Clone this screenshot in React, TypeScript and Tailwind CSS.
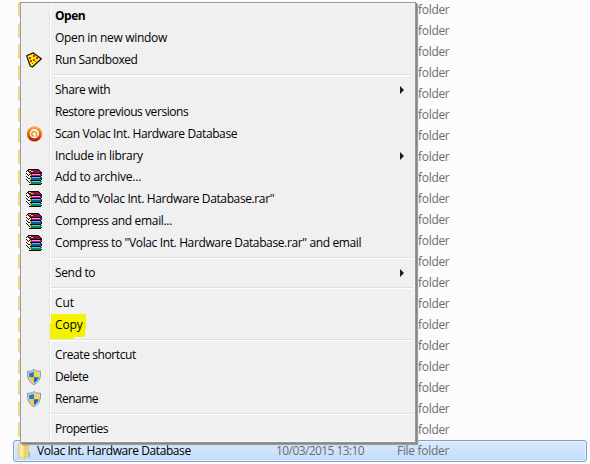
import React from "react";

function Pizza() {
  return (
    <svg width="16" height="16" viewBox="0 0 16 16">
      <path d="M7.200 .9 15.400 6.800 6.400 15 4.200 14 .7 3.800Z" fill="#fff200" stroke="#111" strokeWidth="1.2" strokeLinejoin="round" />
      <path shapeRendering="crispEdges" d="M7 3h2v2H7zM10 5h2v2h-2zM3 5h2v2H3zM7 7h2v2H7zM4 8h2v2H4zM9 9h1v1H9zM6 11h1v1H6z" fill="#f01c1c" />
    </svg>
  );
}

function Avast() {
  return (
    <svg width="16" height="16" viewBox="0 0 16 16">
      <defs>
        <linearGradient id="av" x1="0" y1="0" x2="0" y2="1">
          <stop offset="0" stopColor="#f7b34a" />
          <stop offset=".5" stopColor="#e86c10" />
          <stop offset="1" stopColor="#a01804" />
        </linearGradient>
      </defs>
      <circle cx="8.400" cy="7.800" r="7.6" fill="url(#av)" />
      <circle cx="8.400" cy="7.7" r="4.600" fill="#fff6e6" />
      <path d="M7.800 10.200A2.300 2.300 0 1 1 10.400 7.700V11" fill="none" stroke="#f08a1c" strokeWidth="1.4" />
    </svg>
  );
}

const bookColours: Record<string, string> = {
  k: "#0d0810",
  m: "#8a1248",
  M: "#b3186c",
  P: "#f29ccf",
  y: "#e2cf2e",
  w: "#f6f6f6",
  b: "#0b58ac",
  c: "#62b6f5",
  g: "#058a58",
  G: "#52dca2",
};

const bookPixels = [
  "..kkkkkkkkkkk...",
  ".kmyymmmmmmmmk..",
  "kwkmmyymmmmmmmk.",
  "wwwkmmmmmmmmmmmk",
  "kwwwkkkkkkkkkkkk",
  "wkwkyMPPPPPPPPMM",
  "wwkwyMMMMMMMMMMk",
  "kwwwkkkkkkkkkkk.",
  "wkwwybccccccccbb",
  "wwkkybbbbbbbbbbk",
  "kwwwybbbbbbbbbbk",
  "wkwwkkkkkkkkkkk.",
  "wwkwygGGGGGGGGgg",
  ".wwkygggggggggg.",
  "..wwyggggggggggk",
  "...kkkkkkkkkkkk.",
];

function Books() {
  return (
    <svg width="16" height="16" viewBox="0 0 16 16" shapeRendering="crispEdges">
      {bookPixels.flatMap((row, y) =>
        [...row].map((c, x) => (c === "." ? null : <rect key={`${x}-${y}`} x={x} y={y} width="1" height="1" fill={bookColours[c]} />))
      )}
    </svg>
  );
}

function Shield() {
  return (
    <svg width="16" height="16" viewBox="0 0 16 16">
      <path d="M8 .5C6.5 2 4 2.4 1.6 2.3 1 8.500 2.800 13 8 15.600 13.200 13 15 8.500 14.400 2.300 12 2.400 9.500 2 8 .5Z" fill="#d6dade" stroke="#858c92" />
      <path d="M7.900 2.500C6.500 3.500 5 3.900 3.100 3.900 2.900 5.500 3 7 3.300 8.200H7.900Z" fill="#207ad4" />
      <path d="M8 2.500C9.500 3.500 11 3.900 12.900 3.900 13.100 5.500 13 7 12.700 8.200H8Z" fill="#ffd72e" />
      <path d="M3.300 8.200C4 10.700 5.500 12.700 8 13.900V8.200Z" fill="#fbc81c" />
      <path d="M12.700 8.200C12 10.700 10.500 12.700 8 13.900V8.200Z" fill="#1768c2" />
    </svg>
  );
}

function Folder() {
  return (
    <svg width="14" height="16" viewBox="0 0 14 16" className="shrink-0">
      <defs>
        <linearGradient id="fo" x1="0" y1="0" x2="1" y2="0">
          <stop offset="0" stopColor="#ecd67a" />
          <stop offset=".45" stopColor="#fbeeaa" />
          <stop offset="1" stopColor="#e2c65b" />
        </linearGradient>
      </defs>
      <path d="M5 1h5l1 2v11l-5 1Z" fill="#d8b84a" />
      <path d="M10 9h2v5h-2z" fill="#75b9e3" />
      <path d="M.3 1H4l1 1 3 .5v13L.3 14Z" fill="url(#fo)" stroke="#dfc76c" strokeWidth=".6" />
      <path d="M8 3.500 10.500 2v12L8 15.400Z" fill="#f0d674" />
    </svg>
  );
}

type Entry = { label: string; icon?: () => React.JSX.Element; arrow?: boolean; bold?: boolean; mark?: boolean; short?: boolean; tracking: string };

const groups: Entry[][] = [
  [
    { label: "Open", bold: true, tracking: "tracking-[-0.5px]" },
    { label: "Open in new window", tracking: "tracking-[-0.31px]" },
    { label: "Run Sandboxed", icon: Pizza, tracking: "tracking-[-0.43px]" },
  ],
  [
    { label: "Share with", arrow: true, tracking: "tracking-[-0.4px]" },
    { label: "Restore previous versions", tracking: "tracking-[-0.44px]" },
    { label: "Scan Volac Int. Hardware Database", icon: Avast, tracking: "tracking-[-0.39px]" },
    { label: "Include in library", arrow: true, short: true, tracking: "tracking-[-0.32px]" },
    { label: "Add to archive...", icon: Books, tracking: "tracking-[-0.22px]" },
    { label: 'Add to "Volac Int. Hardware Database.rar"', icon: Books, tracking: "tracking-[-0.38px]" },
    { label: "Compress and email...", icon: Books, tracking: "tracking-[-0.33px]" },
    { label: 'Compress to "Volac Int. Hardware Database.rar" and email', icon: Books, tracking: "tracking-[-0.37px]" },
  ],
  [{ label: "Send to", arrow: true, tracking: "tracking-[-0.35px]" }],
  [
    { label: "Cut", tracking: "tracking-[-0.1px]" },
    { label: "Copy", mark: true, tracking: "tracking-[-0.1px]" },
  ],
  [
    { label: "Create shortcut", tracking: "tracking-[-0.4px]" },
    { label: "Delete", icon: Shield, tracking: "tracking-[-0.5px]" },
    { label: "Rename", icon: Shield, tracking: "tracking-[-0.5px]" },
  ],
  [{ label: "Properties", tracking: "tracking-[-0.52px]" }],
];

function Item({ label, icon: Icon, arrow, bold, mark, short, tracking }: Entry) {
  return (
    <div className={`relative flex items-center ${short ? "h-[21px]" : "h-[22px]"}`}>
      <div className="ml-[3px] h-4 w-[29px] shrink-0">{Icon && <Icon />}</div>
      {mark && (
        <svg className="absolute left-[27px] top-0" width="36" height="25" viewBox="0 0 36 25">
          <path d="M1 0H36V16H35V22H34V23H24V25H0V9H1Z" fill="#f3f300" />
        </svg>
      )}
      <span className={`relative whitespace-nowrap ${bold ? "font-bold" : ""} ${tracking}`}>{label}</span>
      {arrow && (
        <svg className="ml-auto mr-[9px]" width="4" height="8" viewBox="0 0 4 8">
          <path d="M0 0 4 4 0 8Z" fill="#1b1b1b" />
        </svg>
      )}
    </div>
  );
}

export default function App() {
  return (
    <div className="relative h-[464px] w-[590px] overflow-hidden bg-[#fcfcfc] font-['Open_Sans','Noto_Sans',sans-serif] text-[12px] leading-[16px] text-black">
      <div className="-mt-px flex flex-col pl-[13px]">
        {Array.from({ length: 21 }, (_, i) => (
          <div key={i} className="flex h-[21px] items-center pl-[5px] text-[#6d6d6d]">
            <Folder />
            <span className="ml-[386px] mt-px whitespace-nowrap tracking-[-0.3px]">folder</span>
          </div>
        ))}
        <div className="flex h-[22px] w-[574px] items-center rounded-[3px] border border-[#7da2ce] bg-linear-to-b from-[#dcebfc] to-[#c1dbfc] pl-1 shadow-[inset_0_0_0_1px_#e8f2fd]">
          <Folder />
          <span className="ml-[5px] w-[239px] whitespace-nowrap tracking-[-0.42px]">Volac Int. Hardware Database</span>
          <span className="w-[121px] whitespace-nowrap tracking-[-0.58px] text-[#6d6d6d]">10/03/2015 13:10</span>
          <span className="whitespace-nowrap tracking-[-0.3px] text-[#6d6d6d]">File folder</span>
        </div>
        <div className="h-[21px] pl-[5px] pt-[1px]">
          <Folder />
        </div>
      </div>

      <div className="absolute left-[20px] top-[2px] h-[441px] w-[396px] border border-[#979797] bg-[#f0f0f0] p-0.5 shadow-[1px_1px_0_#858585,2px_2px_1px_#a0a0a0] ring-1 ring-inset ring-[#f5f5f5]">
        <div className="absolute bottom-[2px] left-[28px] top-[2px] w-[2px] border-l border-r border-l-[#e2e3e3] border-r-white" />
        {groups.map((group, i) => (
          <React.Fragment key={i}>
            {i > 0 && (
              <div className="flex h-2 items-center pl-[28px]">
                <div className="h-[2px] w-full border-b border-t border-b-white border-t-[#e0e0e0]" />
              </div>
            )}
            {group.map((item) => (
              <Item key={item.label} {...item} />
            ))}
          </React.Fragment>
        ))}
      </div>
    </div>
  );
}
